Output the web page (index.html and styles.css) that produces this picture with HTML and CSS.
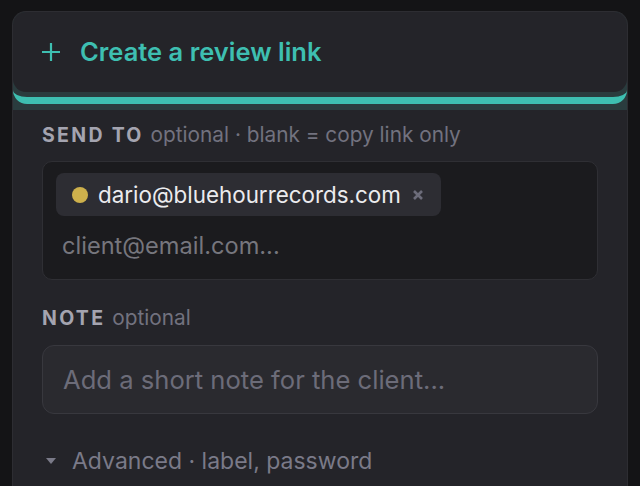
FILE: index.html
```html
<!DOCTYPE html>
<html>
<head>
    <title>Create a review link</title>
    <link rel="stylesheet" href="styles.css">
</head>
<body>
    <div class="card">
        <div class="create-wrap">
            <button class="create">
                <svg class="plus" width="20" height="20" viewBox="0 0 20 20">
                    <path d="M10 1v18M1 10h18" stroke="currentColor" stroke-width="2.2" fill="none"/>
                </svg>
                <span>Create a review link</span>
            </button>
            <div class="create-bar"></div>
        </div>

        <div class="form">
            <div class="label"><b>SEND TO</b> optional · blank = copy link only</div>
            <div class="recipients">
                <div class="chip">
                    <span class="dot"></span>
                    <span class="chip-text">dario@bluehourrecords.com</span>
                    <svg class="chip-x" width="12" height="12" viewBox="0 0 12 12">
                        <path d="M2 2l8 8M10 2l-8 8" stroke="currentColor" stroke-width="2.6" fill="none"/>
                    </svg>
                </div>
                <input class="email-input" type="text" placeholder="client@email.com...">
            </div>

            <div class="label note-label"><b>NOTE</b> optional</div>
            <input class="note" type="text" placeholder="Add a short note for the client...">

            <div class="advanced">
                <svg class="caret" width="10" height="6" viewBox="0 0 10 6">
                    <path d="M0 0h10L5 6z" fill="currentColor"/>
                </svg>
                <span>Advanced · label, password</span>
            </div>
        </div>
    </div>
</body>
</html>
```

FILE: styles.css
```css
body {
    margin: 0;
    padding: 11px 12px 0;
    background: #141416;
    font-family: Inter, "Noto Sans", sans-serif;
    height: 475px;
    overflow: hidden;
}
.card {
    background: #242429;
    border: 1px solid #2d2d32;
    border-bottom: none;
    border-radius: 14px 14px 0 0;
    height: 500px;
}
.create-wrap {
    background: #2a3c3e;
    border-radius: 13px 13px 0 0;
    padding-bottom: 6px;
}
.create {
    position: relative;
    z-index: 1;
    display: flex;
    align-items: center;
    gap: 19px;
    width: 100%;
    height: 80px;
    padding: 0 0 0 28px;
    margin: 0;
    border: none;
    border-radius: 13px;
    background: #242429;
    color: #3ebfb1;
    font-family: inherit;
    font-size: 25.5px;
    line-height: 30px;
    font-weight: 600;
    cursor: pointer;
}
.plus {
    flex: none;
}
.create-bar {
    height: 19px;
    margin-top: -14px;
    border-bottom: 7px solid #3ebfb1;
    border-radius: 0 0 14px 14px;
}
.form {
    display: flex;
    flex-direction: column;
    padding: 14px 29px 0;
}
.label {
    font-size: 20.8px;
    line-height: 22px;
    color: #72727f;
}
.label b {
    color: #a4a4b0;
    font-weight: 700;
    font-size: 19.5px;
    letter-spacing: 2.3px;
    margin-right: 1px;
}
.recipients {
    margin-top: 15px;
    background: #1b1b1e;
    border: 1px solid #2f2f34;
    border-radius: 10px;
    padding: 11px 13px 13px;
    display: flex;
    flex-direction: column;
    align-items: flex-start;
    gap: 8px;
}
.chip {
    display: flex;
    align-items: center;
    height: 43px;
    padding: 0 17px 0 16px;
    background: #2d2d33;
    border-radius: 8px;
    box-sizing: border-box;
}
.dot {
    width: 16px;
    height: 16px;
    border-radius: 50%;
    background: #cdb04c;
    margin-right: 10px;
}
.chip-text {
    font-size: 22.4px;
    line-height: 26px;
    color: #ebebee;
}
.chip-x {
    margin-left: 11px;
    color: #6c6c7a;
}
.email-input {
    width: 100%;
    height: 42px;
    padding: 0 6px;
    box-sizing: border-box;
    border: none;
    outline: none;
    background: transparent;
    font-family: inherit;
    font-size: 23.6px;
    color: #ebebee;
}
.email-input::placeholder {
    color: #76767d;
}
.note-label {
    margin-top: 27px;
}
.note {
    margin-top: 16px;
    height: 69px;
    padding: 0 20px;
    box-sizing: border-box;
    background: #2a2a2f;
    border: 1px solid #38383e;
    border-radius: 12px;
    outline: none;
    font-family: inherit;
    font-size: 25.6px;
    color: #ebebee;
}
.note::placeholder {
    color: #6c6c79;
}
.advanced {
    margin-top: 34px;
    display: flex;
    align-items: center;
    gap: 16px;
    padding-left: 4px;
    font-size: 23px;
    line-height: 26px;
    color: #7a7a88;
}
```
